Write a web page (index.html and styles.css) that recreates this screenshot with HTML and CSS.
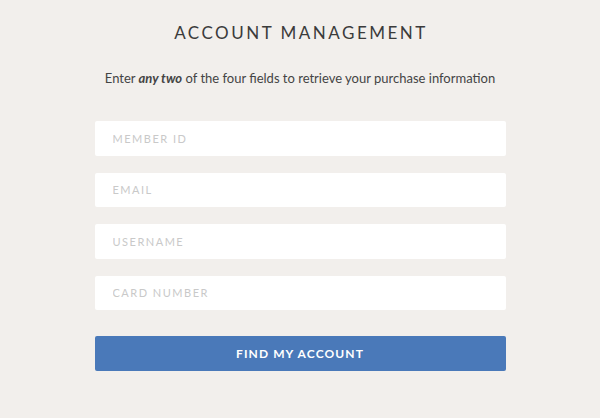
FILE: index.html
```html
<!DOCTYPE html>
<html lang="en">
<head>
<meta charset="utf-8">
<title>Account Management</title>
<link rel="stylesheet" href="styles.css">
</head>
<body>
<main class="page">
  <h1 class="title">Account Management</h1>
  <p class="intro">Enter <em>any two</em> of the four fields to retrieve your purchase information</p>
  <form class="form">
    <input class="field" type="text" placeholder="Member ID">
    <input class="field" type="email" placeholder="Email">
    <input class="field" type="text" placeholder="Username">
    <input class="field" type="text" placeholder="Card Number">
    <button class="submit" type="button">Find My Account</button>
  </form>
</main>
</body>
</html>
```
FILE: styles.css
```css
html, body {
  margin: 0;
  padding: 0;
  background: #f2efec;
}
body {
  font-family: "Lato", "Open Sans", sans-serif;
  color: #3a3a3a;
}
.page {
  width: 411px;
  margin: 0 auto;
  padding-top: 23px;
  display: flex;
  flex-direction: column;
  align-items: stretch;
}
.title {
  margin: 0 0 0 2px;
  text-align: center;
  font-size: 17px;
  font-weight: 400;
  letter-spacing: 2.5px;
  text-transform: uppercase;
  line-height: 20px;
  color: #3b3b3b;
}
.intro {
  margin: 26px -20px 0;
  text-align: center;
  font-size: 13px;
  line-height: 18px;
  color: #444;
}
.intro em {
  font-weight: 700;
  font-style: italic;
}
.form {
  margin-top: 34px;
  display: flex;
  flex-direction: column;
  gap: 17px;
}
.field {
  box-sizing: border-box;
  height: 34.5px;
  border: none;
  border-radius: 2px;
  background: #fff;
  padding: 0 18px;
  font-family: inherit;
  font-size: 11px;
  letter-spacing: 1.5px;
  text-transform: uppercase;
  outline: none;
}
.field::placeholder {
  color: #c9c9c9;
  text-transform: uppercase;
}
.submit {
  margin-top: 9px;
  height: 35px;
  border: none;
  border-radius: 2px;
  background: #4a79b9;
  color: #fff;
  font-family: inherit;
  font-size: 12px;
  font-weight: 700;
  letter-spacing: 1.1px;
  text-transform: uppercase;
}
```
